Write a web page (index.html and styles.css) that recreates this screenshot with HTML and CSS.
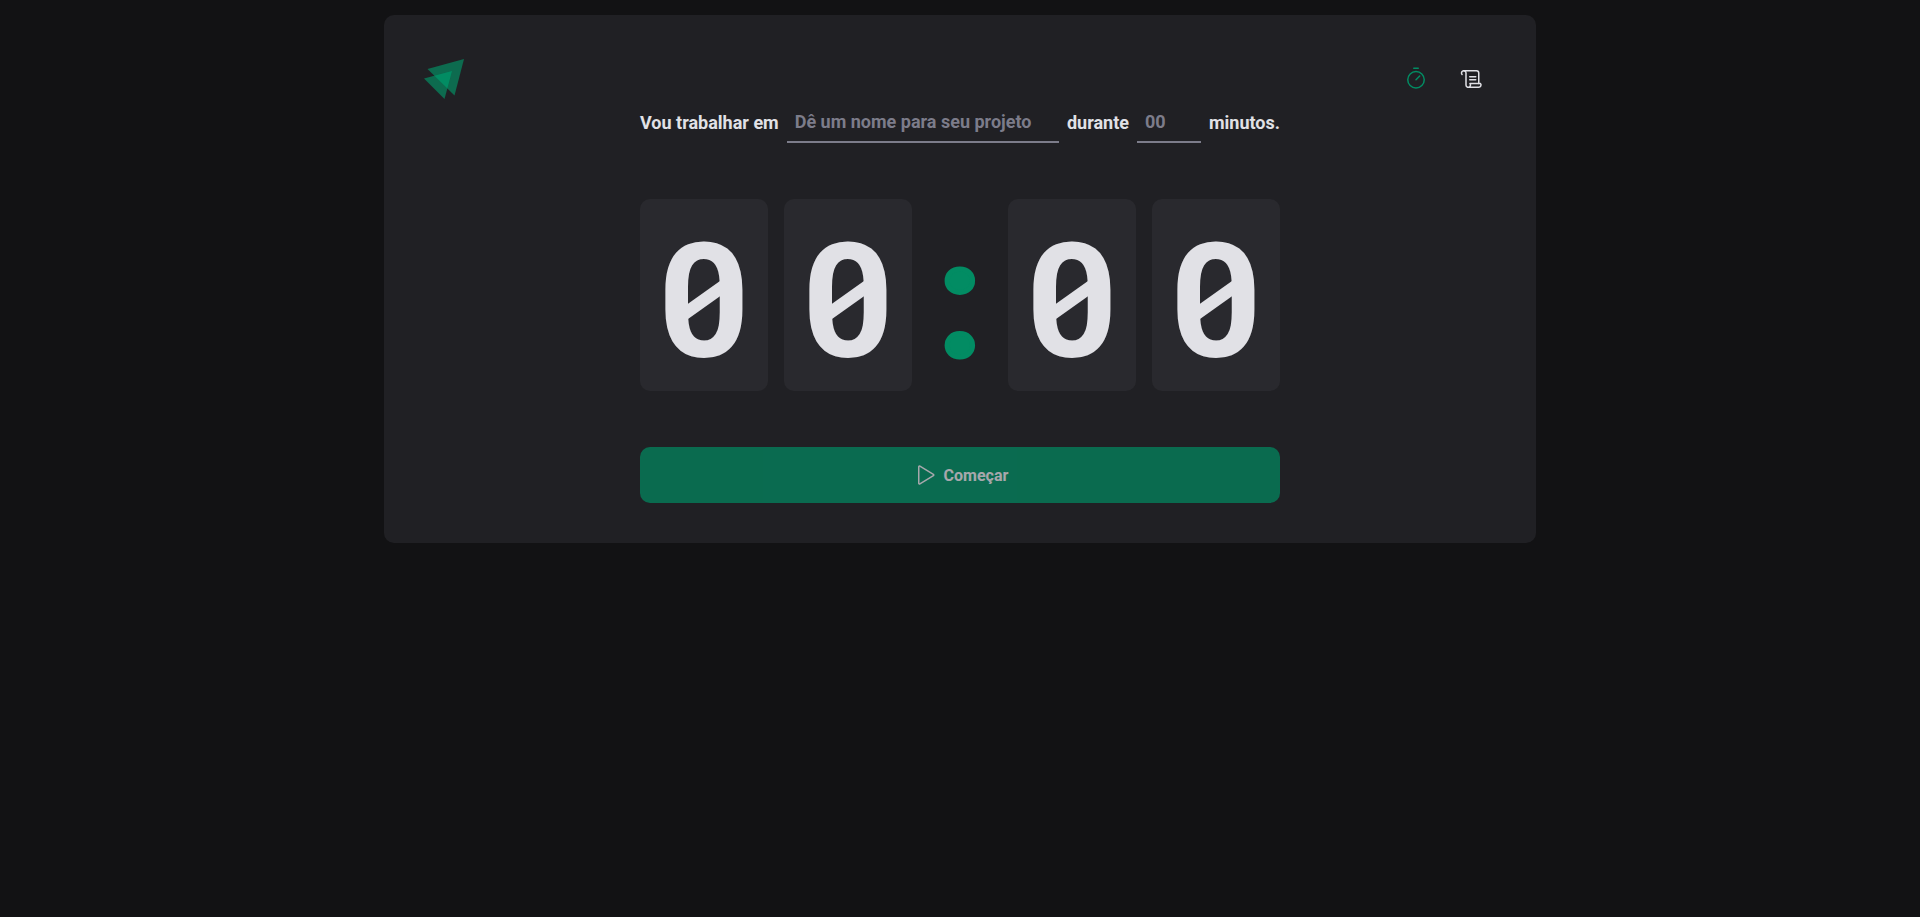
FILE: index.html
```html
<!DOCTYPE html>
<html lang="pt-BR">
<head>
    <meta charset="UTF-8">
    <meta name="viewport" content="width=device-width, initial-scale=1.0">
    <title>Timer</title>
    <link rel="stylesheet" href="styles.css">
</head>
<body>
    <div class="layout">
        <header class="header">
            <svg class="logo" viewBox="0 0 40 40" role="img" aria-label="Logo">
                <clipPath id="front">
                    <polygon points="0,19.5 28,12 20.5,40" />
                </clipPath>
                <polygon class="logo-dark" points="3.5,10 40,0 30.5,36.5" />
                <polygon class="logo-dark" points="0,19.5 28,12 20.5,40" />
                <polygon class="logo-light" points="3.5,10 40,0 30.5,36.5" clip-path="url(#front)" />
            </svg>
            <nav class="nav">
                <a class="active" href="#timer" title="Timer">
                    <svg class="icon" viewBox="0 0 256 256">
                        <circle cx="128" cy="136" r="88" />
                        <path d="M128,136l39.6-39.6M104,14h48" />
                    </svg>
                </a>
                <a href="#history" title="Histórico">
                    <svg class="icon" viewBox="0 0 256 256">
                        <path d="M104,104h64M104,136h64" />
                        <path d="M200,176V64a24,24,0,0,0-24-24H40" />
                        <path d="M22.1,80A24,24,0,1,1,64,64V192a24,24,0,1,0,41.9-16h112A24,24,0,0,1,200,216H88" />
                    </svg>
                </a>
            </nav>
        </header>
        <main>
            <form class="timer-form">
                <div class="fields">
                    <label for="task">Vou trabalhar em</label>
                    <input id="task" class="task-input" type="text" placeholder="Dê um nome para seu projeto">
                    <label for="minutes">durante</label>
                    <input id="minutes" class="minutes-input" type="number" placeholder="00" step="5" min="5" max="60">
                    <span>minutos.</span>
                </div>
                <div class="countdown">
                    <span class="digit zero">0</span>
                    <span class="digit zero">0</span>
                    <div class="separator">:</div>
                    <span class="digit zero">0</span>
                    <span class="digit zero">0</span>
                </div>
                <button class="btn-start" type="submit" disabled>
                    <svg class="icon" viewBox="0 0 256 256">
                        <path d="M72,39.9V216.1a8,8,0,0,0,12.2,6.8l144.1-88.1a7.9,7.9,0,0,0,0-13.6L84.2,33.1A8,8,0,0,0,72,39.9Z" />
                    </svg>
                    Começar
                </button>
            </form>
        </main>
    </div>
</body>
</html>
```
FILE: styles.css
```css
* {
    margin: 0;
    padding: 0;
    box-sizing: border-box;
}
body {
    background: #121214;
    color: #e1e1e6;
    font-family: Roboto, sans-serif;
    font-size: 16px;
}
input, button {
    font-family: inherit;
    font-size: inherit;
    font-weight: inherit;
}
.layout {
    max-width: 1152px;
    margin: 15px auto;
    padding: 40px;
    background: #202024;
    border-radius: 10px;
}
.header {
    display: flex;
    align-items: center;
    justify-content: space-between;
}
.logo {
    width: 40px;
    height: 40px;
}
.logo-dark { fill: #0d6b4f; }
.logo-light { fill: #028c63; }
.nav {
    display: flex;
    gap: 8px;
}
.nav a {
    display: flex;
    align-items: center;
    justify-content: center;
    width: 48px;
    height: 48px;
    color: #e1e1e6;
}
.nav a.active { color: #028c63; }
.icon {
    width: 24px;
    height: 24px;
    fill: none;
    stroke: currentColor;
    stroke-width: 16;
    stroke-linecap: round;
    stroke-linejoin: round;
}
.timer-form {
    display: flex;
    flex-direction: column;
    gap: 56px;
    max-width: 640px;
    margin: 0 auto;
}
.fields {
    display: flex;
    align-items: center;
    gap: 8px;
    font-size: 18px;
    font-weight: bold;
    white-space: nowrap;
}
.fields label, .fields span {
    padding-bottom: 2px;
}
.fields input {
    height: 40px;
    padding: 0 8px 2px;
    background: transparent;
    border: 0;
    border-bottom: 2px solid #7c7c8a;
    color: #e1e1e6;
    outline: none;
}
.fields input::placeholder { color: #7c7c8a; }
.fields input:focus { border-color: #028c63; }
.task-input {
    flex: 1;
    min-width: 0;
}
.minutes-input {
    width: 64px;
    appearance: textfield;
}
.countdown {
    display: flex;
    gap: 16px;
    font-size: 160px;
    font-weight: bold;
    line-height: 128px;
}
.digit {
    position: relative;
    flex: 1;
    padding: 39px 0 25px;
    background: #29292e;
    border-radius: 10px;
    text-align: center;
}
/* slash through the zero */
.zero::after {
    content: "";
    position: absolute;
    inset: 82px 48px 72px;
    background: #e1e1e6;
    clip-path: polygon(0 60%, 100% 0, 100% 40%, 0 100%);
}
.separator {
    display: flex;
    justify-content: center;
    width: 64px;
    padding: 39px 0 25px;
    color: #028c63;
    -webkit-text-stroke: 5px #028c63;
}
.btn-start {
    display: flex;
    align-items: center;
    justify-content: center;
    gap: 8px;
    height: 56px;
    border: none;
    border-radius: 10px;
    background: #028c63;
    color: #e1e1e6;
    font-weight: bold;
    cursor: pointer;
}
.btn-start:disabled {
    opacity: 0.7;
    cursor: not-allowed;
}
@media (max-width: 768px) {
    .layout { padding: 20px; }
    .fields { flex-wrap: wrap; }
    .countdown {
        gap: 8px;
        font-size: 80px;
    }
    .zero::after { display: none; }
}
```
